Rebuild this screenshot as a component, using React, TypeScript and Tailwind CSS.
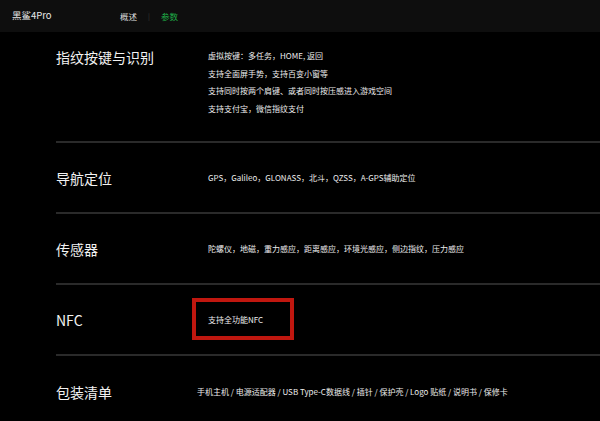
import React from 'react';

const font = { fontFamily: '"Noto Sans CJK SC", "Noto Sans", sans-serif' };

type Row = { title: string; lines: string[]; gap?: string; nfc?: boolean };

const rows: Row[] = [
  { title: '导航定位', lines: ['GPS，Galileo，GLONASS，北斗，QZSS，A-GPS辅助定位'] },
  { title: '传感器', lines: ['陀螺仪，地磁，重力感应，距离感应，环境光感应，侧边指纹，压力感应'] },
  { title: 'NFC', lines: ['支持全功能NFC'], nfc: true },
  { title: '包装清单', lines: ['手机主机 / 电源适配器 / USB Type-C数据线 / 插针 / 保护壳 / Logo 贴纸 / 说明书 / 保修卡'] },
];

export default function App() {
  return (
    <main className="min-h-screen w-[600px] h-[421px] overflow-hidden bg-black text-[#ececec]" style={font}>
      {/* Top bar */}
      <header className="h-[32px] bg-[#0e0e0e] flex items-center pl-[12px]">
        <div className="w-[108px] text-[9.5px] text-[#e8e8e8] leading-none">黑鲨4Pro</div>
        <nav className="flex items-center text-[8.5px] leading-none">
          <span className="text-[#dddddd]">概述</span>
          <span className="mx-[11px] text-[#3a3a3a] text-[7px]">|</span>
          <span className="text-[#1fae48]">参数</span>
        </nav>
      </header>

      <section className="pl-[56px]">
        {/* First block */}
        <div className="h-[111px] flex items-start pt-[15px] border-b-2 border-[#2a2a2a]">
          <h2 className="w-[152px] text-[14px] leading-[20px] text-[#f2f2f2]">指纹按键与识别</h2>
          <div className="text-[8px] leading-[17.6px]">
            <p>虚拟按键：多任务，HOME, 返回</p>
            <p>支持全面屏手势，支持百变小窗等</p>
            <p>支持同时按两个肩键、或者同时按压感进入游戏空间</p>
            <p>支持支付宝，微信指纹支付</p>
          </div>
        </div>

        {rows.map((r, i) => (
          <div
            key={r.title}
            className={
              i < rows.length - 1
                ? 'h-[71px] flex items-center border-b-2 border-[#2a2a2a]'
                : 'h-[71px] flex items-center'
            }
          >
            <h2
              className={
                i === rows.length - 1
                  ? 'w-[141px] text-[14px] leading-[20px] text-[#f2f2f2]'
                  : 'w-[152px] text-[14px] leading-[20px] text-[#f2f2f2]'
              }
            >
              {r.title}
            </h2>
            <div className="relative text-[8px] leading-[12px] whitespace-nowrap">
              {r.lines[0]}
              {r.nfc && (
                <div className="absolute left-[-16px] top-[-16px] w-[102px] h-[42px] border-4 border-[#c0170f]" />
              )}
            </div>
          </div>
        ))}
      </section>
    </main>
  );
}
